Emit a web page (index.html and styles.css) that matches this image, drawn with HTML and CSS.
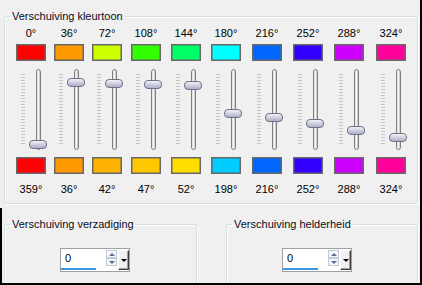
FILE: index.html
```html
<!DOCTYPE html>
<html lang="nl">
<head>
    <meta charset="UTF-8">
    <title>Verschuiving kleurtoon</title>
    <link rel="stylesheet" href="styles.css">
</head>
<body>
    <div class="window">
        <fieldset class="group hue-group">
            <legend>Verschuiving kleurtoon</legend>
            <div class="hue-grid" id="hue-grid"></div>
        </fieldset>

        <div class="bottom-row">
            <fieldset class="group small-group">
                <legend>Verschuiving verzadiging</legend>
                <div class="spin-box">
                    <div class="spin-field">
                        <span class="spin-value">0</span>
                        <span class="spin-bar"></span>
                    </div>
                    <div class="spin-arrows">
                        <span class="arrow-up"></span>
                        <span class="arrow-down"></span>
                    </div>
                    <div class="spin-drop"></div>
                </div>
            </fieldset>
            <fieldset class="group small-group right-group">
                <legend>Verschuiving helderheid</legend>
                <div class="spin-box">
                    <div class="spin-field">
                        <span class="spin-value">0</span>
                        <span class="spin-bar"></span>
                    </div>
                    <div class="spin-arrows">
                        <span class="arrow-up"></span>
                        <span class="arrow-down"></span>
                    </div>
                    <div class="spin-drop"></div>
                </div>
            </fieldset>
        </div>
    </div>

    <script>
        const grid = document.getElementById('hue-grid');

        // from hue -> to hue, colours as shown in the dialog
        const shifts = [
            { from: 0,   fromColor: '#ff0000', to: 359, toColor: '#ff0004' },
            { from: 36,  fromColor: '#ff9900', to: 36,  toColor: '#ff9900' },
            { from: 72,  fromColor: '#ccff00', to: 42,  toColor: '#ffb300' },
            { from: 108, fromColor: '#33ff00', to: 47,  toColor: '#ffc800' },
            { from: 144, fromColor: '#00ff66', to: 52,  toColor: '#ffdd00' },
            { from: 180, fromColor: '#00ffff', to: 198, toColor: '#00ccff' },
            { from: 216, fromColor: '#0066ff', to: 216, toColor: '#0066ff' },
            { from: 252, fromColor: '#3300ff', to: 252, toColor: '#3300ff' },
            { from: 288, fromColor: '#cc00ff', to: 288, toColor: '#cc00ff' },
            { from: 324, fromColor: '#ff0099', to: 324, toColor: '#ff0099' }
        ];

        shifts.forEach(shift => {
            const col = document.createElement('div');
            col.classList.add('hue-col');
            const thumbTop = 1 + Math.round(shift.to * 69 / 359);
            col.innerHTML = `
                <span class="deg">${shift.from}°</span>
                <span class="swatch" style="background:${shift.fromColor}"></span>
                <div class="slider">
                    <span class="ticks"></span>
                    <span class="track"><span class="thumb" style="top:${thumbTop}px"></span></span>
                </div>
                <span class="swatch swatch-bottom" style="background:${shift.toColor}"></span>
                <span class="deg deg-bottom">${shift.to}°</span>
            `;
            grid.appendChild(col);
        });
    </script>
</body>
</html>
```

FILE: styles.css
```css
body {
    margin: 0;
    padding: 0;
    font-family: "Liberation Sans", Arial, sans-serif;
    font-size: 11px;
    line-height: 13px;
    color: #000;
    background: #fff;
}
.window {
    width: 420px;
    height: 273px;
    background: #f0f0f0;
    border-right: 2px solid #000;
    border-bottom: 2px solid #000;
    padding-top: 10px;
    overflow: hidden;
}
.group {
    margin: 0;
    padding: 0;
    border: 1px solid #d5dfe5;
    border-radius: 3px;
    box-shadow: inset 1px 1px 0 #fff, 1px 1px 0 #fff;
    box-sizing: border-box;
}
.group legend {
    margin-left: 5px;
    padding: 0 2px;
    line-height: 13px;
    color: #0a0a20;
}
.hue-group {
    margin-left: 4px;
    width: 414px;
    height: 194px;
}
.hue-grid {
    display: grid;
    grid-template-columns: 38px 38px 38px 40px 40px 40px 42px 40px 42px 42px;
    padding: 4px 0 0 7px;
}
.hue-col {
    display: flex;
    flex-direction: column;
    align-items: center;
}
.deg {
    height: 13px;
}
.swatch {
    margin-top: 4px;
    width: 30px;
    height: 17px;
    box-sizing: border-box;
    border: 1px solid #686868;
    box-shadow: inset 0 0 0 0.5px #686868;
}
.swatch-bottom {
    margin-top: 7px;
}
.deg-bottom {
    margin-top: 9px;
}
.slider {
    margin-top: 8px;
    width: 20px;
    height: 81px;
    display: flex;
    gap: 11px;
}
.ticks {
    margin-top: 5px;
    width: 4px;
    height: 70px;
    background: repeating-linear-gradient(to bottom, #c6c6c6 0 1px, transparent 1px 3px);
}
.track {
    position: relative;
    width: 5px;
    height: 81px;
    box-sizing: border-box;
    border: 1px solid #7e7e7e;
    border-radius: 3px;
    background: linear-gradient(to right, #d8d8d8, #fafafa 45%, #bdbdbd);
}
.thumb {
    position: absolute;
    left: -8px;
    width: 18px;
    height: 9px;
    box-sizing: border-box;
    border: 1px solid #707088;
    border-radius: 4px;
    background: linear-gradient(to bottom, #f2f2f8, #d2d2e2 45%, #b0b0c8);
}
.bottom-row {
    margin-top: 4px;
    height: 75px;
    border-left: 2px solid #000;
    padding-top: 10px;
    box-sizing: border-box;
    display: flex;
    overflow: hidden;
}
.small-group {
    margin-left: 2px;
    width: 193px;
    height: 100px;
}
.right-group {
    margin-left: 29px;
    width: 192px;
}
.spin-box {
    margin: 17px 0 0 55px;
    width: 70px;
    height: 24px;
    box-sizing: border-box;
    border: 1px solid #a0a0a0;
    background: #fff;
    display: flex;
}
.spin-field {
    width: 43px;
    display: flex;
    flex-direction: column;
}
.spin-value {
    margin-top: 3px;
    padding-left: 4px;
}
.spin-bar {
    margin-top: auto;
    margin-bottom: 1px;
    width: 35px;
    height: 2px;
    background: #3c96e6;
}
.spin-arrows {
    margin: 1px 0 0 2px;
    width: 11px;
    height: 16px;
    display: flex;
    flex-direction: column;
}
.arrow-up,
.arrow-down {
    height: 8px;
    box-sizing: border-box;
    border: 1px solid #c4cbd8;
    background: #f4f6fa;
    display: flex;
    align-items: center;
    justify-content: center;
}
.arrow-up::before {
    content: "";
    border-left: 3px solid transparent;
    border-right: 3px solid transparent;
    border-bottom: 3px solid #5b6b9b;
}
.arrow-down::before {
    content: "";
    border-left: 3px solid transparent;
    border-right: 3px solid transparent;
    border-top: 3px solid #5b6b9b;
}
.spin-drop {
    margin: 1px 0 0 1px;
    width: 11px;
    height: 20px;
    box-sizing: border-box;
    background: #f0f0f0;
    border-top: 1px solid #fff;
    border-left: 1px solid #fff;
    border-right: 1px solid #404040;
    border-bottom: 1px solid #404040;
    box-shadow: inset -1px -1px 0 #a0a0a0;
    display: flex;
    align-items: center;
    justify-content: center;
}
.spin-drop::before {
    content: "";
    border-left: 3px solid transparent;
    border-right: 3px solid transparent;
    border-top: 3px solid #000;
}
```
